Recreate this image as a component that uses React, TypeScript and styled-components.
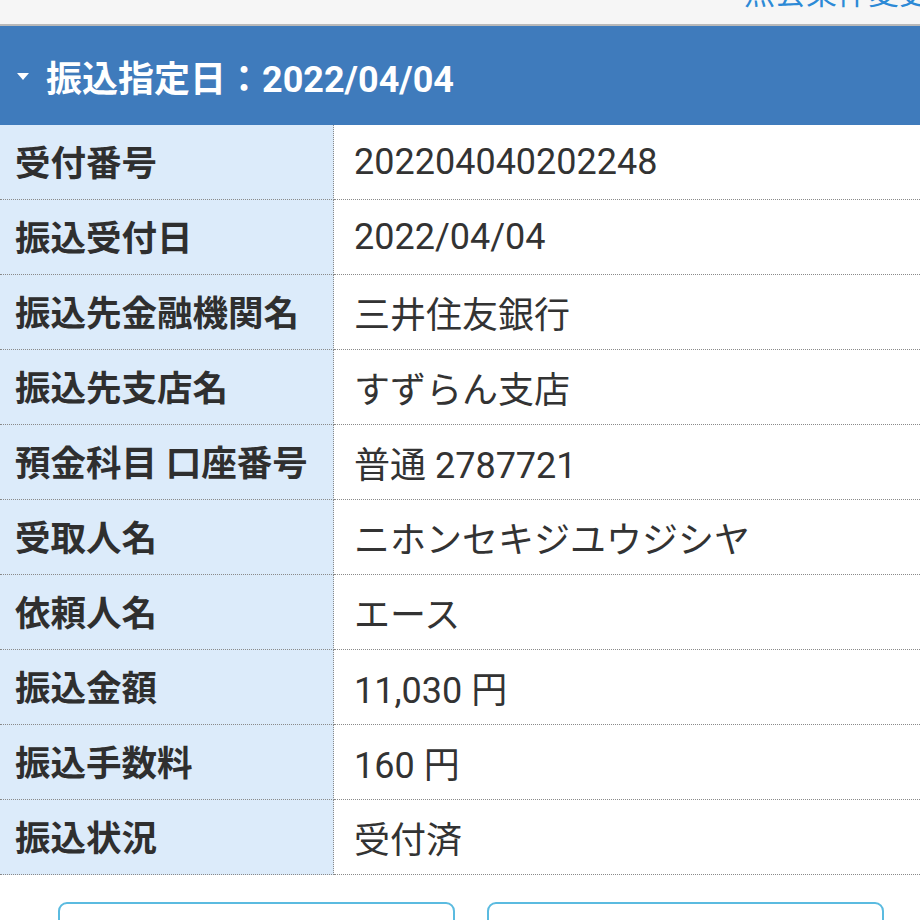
import React from "react";
import styled, { createGlobalStyle } from "styled-components";

const Global = createGlobalStyle`
  html, body { margin: 0; padding: 0; background: #ffffff; }
  body { font-family: Roboto, "Noto Sans CJK JP", sans-serif; width: 920px; overflow: hidden; }
`;

const Page = styled.div`
  width: 920px;
  height: 920px;
  overflow: hidden;
  display: flex;
  flex-direction: column;
  & > * { flex-shrink: 0; }
`;

const TopBar = styled.div`
  height: 24px;
  background: #f6f6f6;
  border-bottom: 2px solid #b9b9b9;
  display: flex;
  justify-content: flex-end;
  align-items: flex-end;
  overflow: hidden;
`;

const TopLink = styled.span`
  font-size: 31px;
  line-height: 30px;
  color: #2d8ad6;
  margin-right: -10px;
  white-space: nowrap;
  transform: translateY(-15px);
`;

const Header = styled.div`
  height: 99px;
  background: #3f7bbc;
  display: flex;
  align-items: center;
  padding-left: 17px;
  gap: 17px;
  color: #ffffff;
  font-weight: 700;
  font-size: 36px;
`;

const Caret = styled.span`
  width: 0;
  height: 0;
  border-left: 6px solid transparent;
  border-right: 6px solid transparent;
  border-top: 7px solid #ffffff;
  margin-top: 2px;
`;

const Table = styled.div`
  display: grid;
  grid-template-columns: 334px 1fr;
`;

const Label = styled.div`
  background: #dcebfa;
  border-right: 1px dotted #8a8a8a;
  border-bottom: 1px dotted #8a8a8a;
  box-sizing: border-box;
  height: 75px;
  display: flex;
  align-items: center;
  padding-left: 15px;
  padding-bottom: 3px;
  font-size: 35.5px;
  font-weight: 700;
  color: #2f2f2f;
  white-space: nowrap;
`;

const Value = styled.div`
  height: 75px;
  box-sizing: border-box;
  border-bottom: 1px dotted #8a8a8a;
  display: flex;
  align-items: center;
  padding-left: 20px;
  font-size: 36px;
  color: #333333;
  white-space: nowrap;
`;

const Buttons = styled.div`
  display: flex;
  gap: 32px;
  padding: 27px 0 0 58px;
`;

const Btn = styled.div`
  width: 397px;
  height: 60px;
  box-sizing: border-box;
  border: 2px solid #5bbbe0;
  border-radius: 9px;
  background: #ffffff;
`;

const rows: [string, string][] = [
  ["受付番号", "202204040202248"],
  ["振込受付日", "2022/04/04"],
  ["振込先金融機関名", "三井住友銀行"],
  ["振込先支店名", "すずらん支店"],
  ["預金科目 口座番号", "普通 2787721"],
  ["受取人名", "ニホンセキジユウジシヤ"],
  ["依頼人名", "エース"],
  ["振込金額", "11,030 円"],
  ["振込手数料", "160 円"],
  ["振込状況", "受付済"],
];

export default function App() {
  return (
    <Page>
      <Global />
      <TopBar>
        <TopLink>照会条件変更</TopLink>
      </TopBar>
      <Header>
        <Caret />
        <span>振込指定日：2022/04/04</span>
      </Header>
      <Table>
        {rows.map(([l, v]) => (
          <React.Fragment key={l}>
            <Label>{l}</Label>
            <Value>{v}</Value>
          </React.Fragment>
        ))}
      </Table>
      <Buttons>
        <Btn />
        <Btn />
      </Buttons>
    </Page>
  );
}
